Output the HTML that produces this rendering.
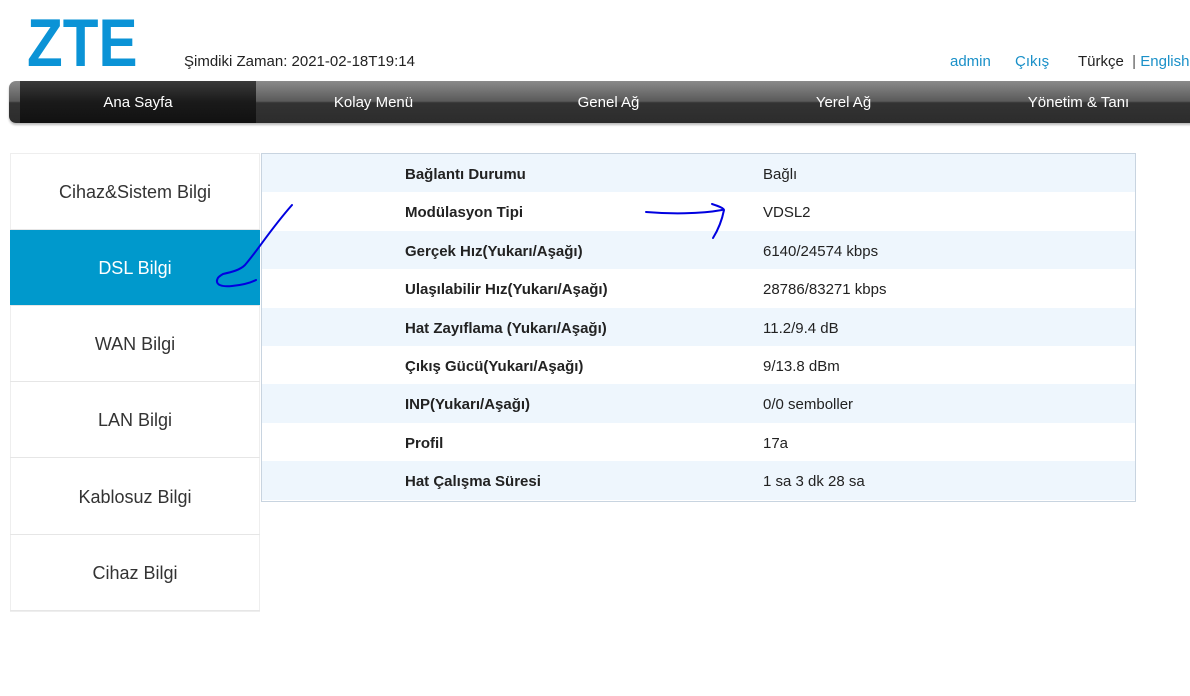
<!DOCTYPE html>
<html><head><meta charset="utf-8"><style>
body{margin:0;width:1190px;height:696px;background:#fff;font-family:"Liberation Sans","DejaVu Sans",sans-serif;position:relative;overflow:hidden}
.a{position:absolute}
.logo{left:27px;top:9px;font-size:68px;font-weight:bold;color:#0b93d6;letter-spacing:0;line-height:68px;transform:scaleX(0.86);transform-origin:left}
.nav{left:9px;top:81px;width:1200px;height:42px;border-radius:7px 0 0 7px;background:linear-gradient(#8a8a8a,#5a5a5a 48%,#333 52%,#2c2c2c);box-shadow:0 2px 2px #bbb}
.nav div{position:absolute;top:0;height:42px;line-height:44px;color:#fff;font-size:15px;text-align:center;width:235px}
.side{left:10px;width:250px;height:76px;line-height:76px;text-align:center;font-size:18px;color:#333;border-bottom:1px solid #e6e6e6;box-sizing:border-box}
.tbl{left:261px;top:153px;width:875px;height:349px;border:1px solid #c8d4e0;box-sizing:border-box;overflow:hidden}
.row{position:absolute;left:0;width:873px;height:38.4px;line-height:42px;font-size:15px;color:#222}
.row b{position:absolute;left:143px}
.row span{position:absolute;left:501px}
</style></head><body>
<div class="a logo">ZTE</div>
<div class="a" style="left:184px;top:53px;font-size:15px;color:#222">Şimdiki Zaman: 2021-02-18T19:14</div>
<div class="a" style="left:950px;top:53px;font-size:15px;color:#1a90c8">admin</div>
<div class="a" style="left:1015px;top:53px;font-size:15px;color:#1a90c8">Çıkış</div>
<div class="a" style="left:1078px;top:53px;font-size:15px;color:#222;white-space:nowrap">Türkçe <span style="color:#555">&nbsp;|&nbsp;</span><span style="color:#1a90c8">English</span></div>
<div class="a nav">
<div style="left:11px;width:236px;background:linear-gradient(#3a3a3a,#1a1a1a 50%,#111);">Ana Sayfa</div>
<div style="left:247px">Kolay Menü</div>
<div style="left:482px">Genel Ağ</div>
<div style="left:717px">Yerel Ağ</div>
<div style="left:952px">Yönetim &amp; Tanı</div>
</div>
<div class="a" style="left:10px;top:153px;width:250px;height:459px;border:1px solid #eee;box-sizing:border-box"></div>
<div class="a side" style="top:154px">Cihaz&amp;Sistem Bilgi</div>
<div class="a side" style="top:230px;background:#0099cc;color:#fff">DSL Bilgi</div>
<div class="a side" style="top:306px">WAN Bilgi</div>
<div class="a side" style="top:382px">LAN Bilgi</div>
<div class="a side" style="top:459px">Kablosuz Bilgi</div>
<div class="a side" style="top:535px">Cihaz Bilgi</div>
<div class="a tbl">
<div class="row" style="top:0;background:#eef6fd"><b>Bağlantı Durumu</b><span>Bağlı</span></div>
<div class="row" style="top:38.4px"><b>Modülasyon Tipi</b><span>VDSL2</span></div>
<div class="row" style="top:76.8px;background:#eef6fd"><b>Gerçek Hız(Yukarı/Aşağı)</b><span>6140/24574 kbps</span></div>
<div class="row" style="top:115.2px"><b>Ulaşılabilir Hız(Yukarı/Aşağı)</b><span>28786/83271 kbps</span></div>
<div class="row" style="top:153.6px;background:#eef6fd"><b>Hat Zayıflama (Yukarı/Aşağı)</b><span>11.2/9.4 dB</span></div>
<div class="row" style="top:192px"><b>Çıkış Gücü(Yukarı/Aşağı)</b><span>9/13.8 dBm</span></div>
<div class="row" style="top:230.4px;background:#eef6fd"><b>INP(Yukarı/Aşağı)</b><span>0/0 semboller</span></div>
<div class="row" style="top:268.8px"><b>Profil</b><span>17a</span></div>
<div class="row" style="top:307.2px;background:#eef6fd"><b>Hat Çalışma Süresi</b><span>1 sa 3 dk 28 sa</span></div>
</div>
<svg class="a" style="left:0;top:0" width="1190" height="696" fill="none" stroke="#0000e0" stroke-width="2" stroke-linecap="round">
<path d="M292 205 C270 230 258 250 245 265 C240 270 232 272 223 274 M217 280 C216 285 222 287 232 286 C242 285 250 283 256 280 M223 274 C218 277 217 278 217 282"/>
<path d="M646 212 C670 214 700 214 722 210 M712 204 C718 206 724 208 724 210 C722 220 718 230 713 238"/>
</svg>
</body></html>
